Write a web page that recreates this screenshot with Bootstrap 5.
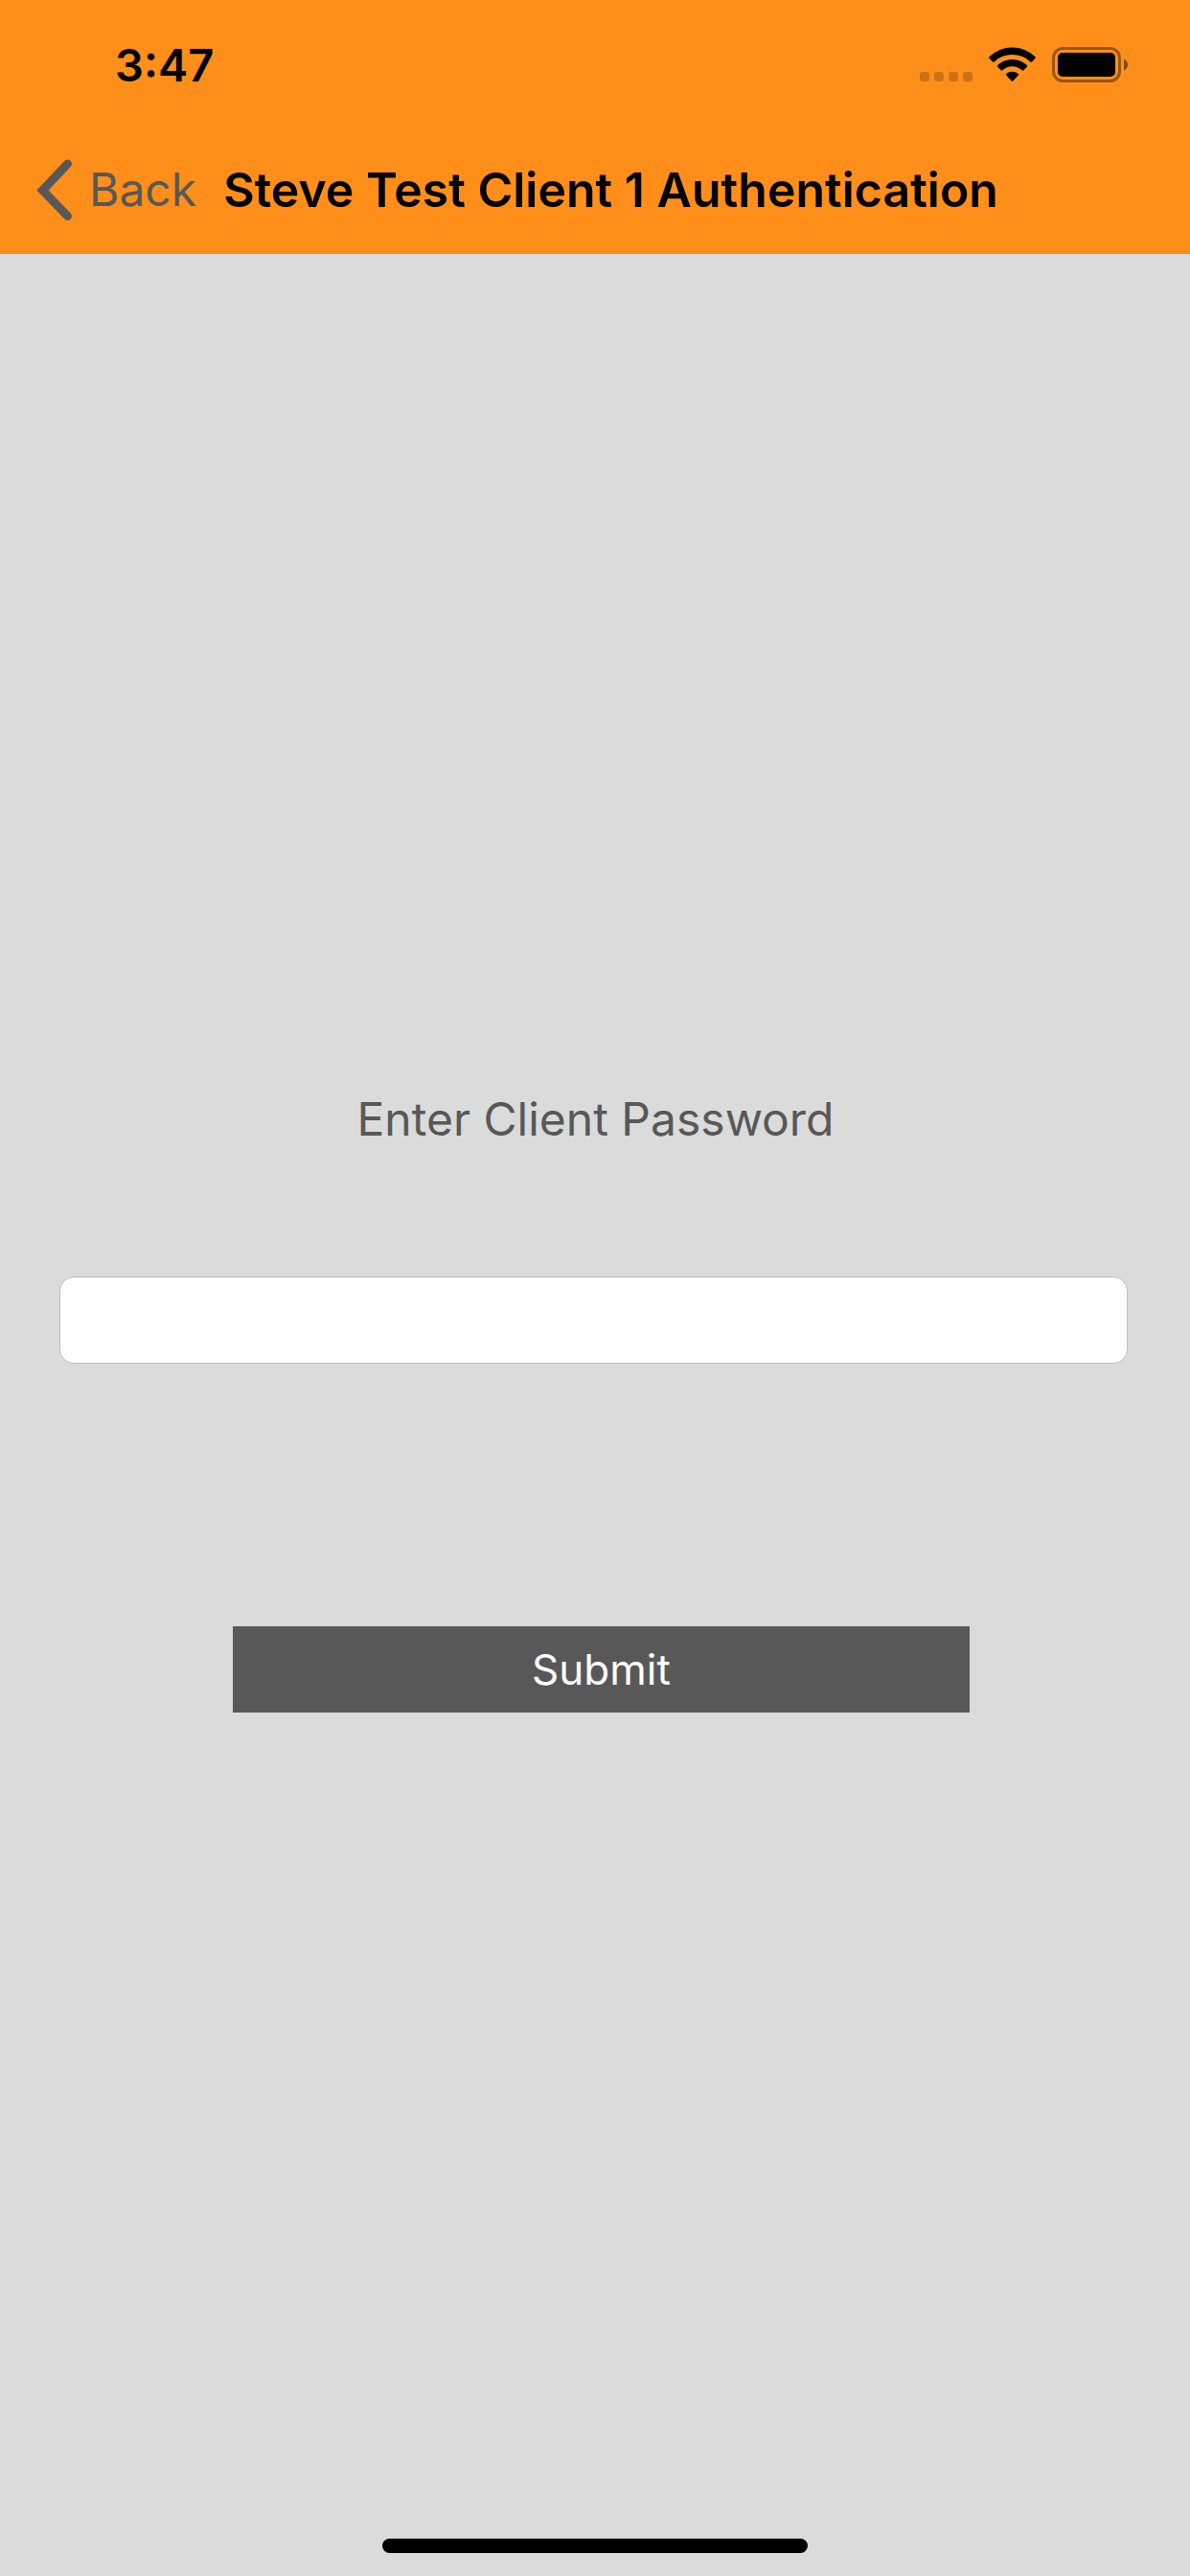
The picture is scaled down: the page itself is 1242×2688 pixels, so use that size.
<!DOCTYPE html>
<html lang="en">
<head>
<meta charset="utf-8">
<meta name="viewport" content="width=device-width, initial-scale=1">
<title>Client Authentication</title>
<link href="https://cdn.jsdelivr.net/npm/bootstrap@5.3.0/dist/css/bootstrap.min.css" rel="stylesheet">
<style>
  body { background: #dbdbdb; color: #585858; font-family: Inter, "Liberation Sans", sans-serif; font-size: 48px; line-height: 60px; }
  .app-header { background: #ff8f1a; border-bottom: 1px solid #a09a94; }
  .status-row { height: 132px; padding: 38px 65px 0 120px; }
  .clock { color: #000; font-weight: 600; font-size: 47px; line-height: 60px; }
  .status-icons { gap: 16px; padding-top: 11px; }
  .nav-row { height: 132px; padding: 0 36px; gap: 28px; }
  .back-link { color: #585858; gap: 15px; }
  .screen-title { color: #000; font-size: 50px; line-height: 60px; font-weight: 600; }
  .auth-form { padding: 873px 65px 0 62px; }
  .field-label { margin-bottom: 134px; }
  .password-box, .password-box:focus { height: 91px; background: #fff; border: 1px solid #bdbdbd; border-radius: 15px; font-size: 42px; }
  .submit-btn, .submit-btn:hover { width: 69%; height: 90px; margin: 274px 0 0 16px; background: #585858; color: #fff; font-size: 44px; line-height: 60px; }
  .home-bar { width: 444px; height: 15px; margin-bottom: 24px; background: #000; }
</style>
</head>
<body>
<div class="min-vh-100 d-flex flex-column">
  <header class="app-header">
    <div class="status-row d-flex justify-content-between align-items-start">
      <span class="clock">3:47</span>
      <div class="status-icons d-flex">
        <svg width="56" height="38" viewBox="0 0 56 38" fill="#000" fill-opacity=".2" aria-hidden="true">
          <rect x="0" y="26" width="10" height="10" rx="3"/><rect x="15" y="26" width="10" height="10" rx="3"/><rect x="30" y="26" width="10" height="10" rx="3"/><rect x="45" y="26" width="10" height="10" rx="3"/>
        </svg>
        <svg width="50" height="38" viewBox="0 0 50 38" aria-hidden="true">
          <path d="M.6 10.2a34.500 34.500 0 0 1 47.800 0q.9.900 0 1.800l-3.400 3.400q-.8.800-1.700 0a27.300 27.300 0 0 0-37.600 0q-.9.800-1.700 0L.6 12q-.9-.9 0-1.800z"/>
          <path d="M9.200 19a22.300 22.300 0 0 1 30.600 0q.9.900 0 1.800l-3.500 3.400q-.8.700-1.700 0a15 15 0 0 0-20.200 0q-.9.700-1.700 0l-3.500-3.400q-.9-.9 0-1.800z"/>
          <path d="M18.200 27.900a10 10 0 0 1 12.600 0q.9.800 0 1.700l-5.500 5.800q-.8.800-1.600 0l-5.500-5.800q-.9-.9 0-1.700z"/>
        </svg>
        <svg width="79" height="38" viewBox="0 0 79 38" aria-hidden="true">
          <rect x="1.500" y="1.500" width="69" height="34" rx="10" fill="none" stroke="#000" stroke-opacity=".4" stroke-width="3"/>
          <rect x="6" y="6" width="60" height="25" rx="5"/>
          <path d="M75 12.500q4 2 4 6t-4 6z" fill-opacity=".5"/>
        </svg>
      </div>
    </div>
    <nav class="nav-row d-flex align-items-center">
      <a href="#" class="back-link d-flex align-items-center text-decoration-none">
        <svg width="42" height="66" viewBox="0 0 42 66" fill="none" stroke="#585858" stroke-width="9" stroke-linecap="round" stroke-linejoin="miter" aria-hidden="true"><path d="M34.500 6 8.500 33.500l26 27"/></svg>
        <span>Back</span>
      </a>
      <h1 class="screen-title m-0 text-nowrap">Steve Test Client 1 Authentication</h1>
    </nav>
  </header>
  <main class="flex-grow-1">
    <form class="auth-form text-center">
      <label for="password" class="field-label d-block ps-1">Enter Client Password</label>
      <input type="password" id="password" class="password-box form-control shadow-none">
      <button type="submit" class="submit-btn btn border-0 rounded-0 p-0">Submit</button>
    </form>
  </main>
  <div class="home-bar rounded-pill align-self-center"></div>
</div>
<script src="https://cdn.jsdelivr.net/npm/bootstrap@5.3.0/dist/js/bootstrap.bundle.min.js"></script>
</body>
</html>
